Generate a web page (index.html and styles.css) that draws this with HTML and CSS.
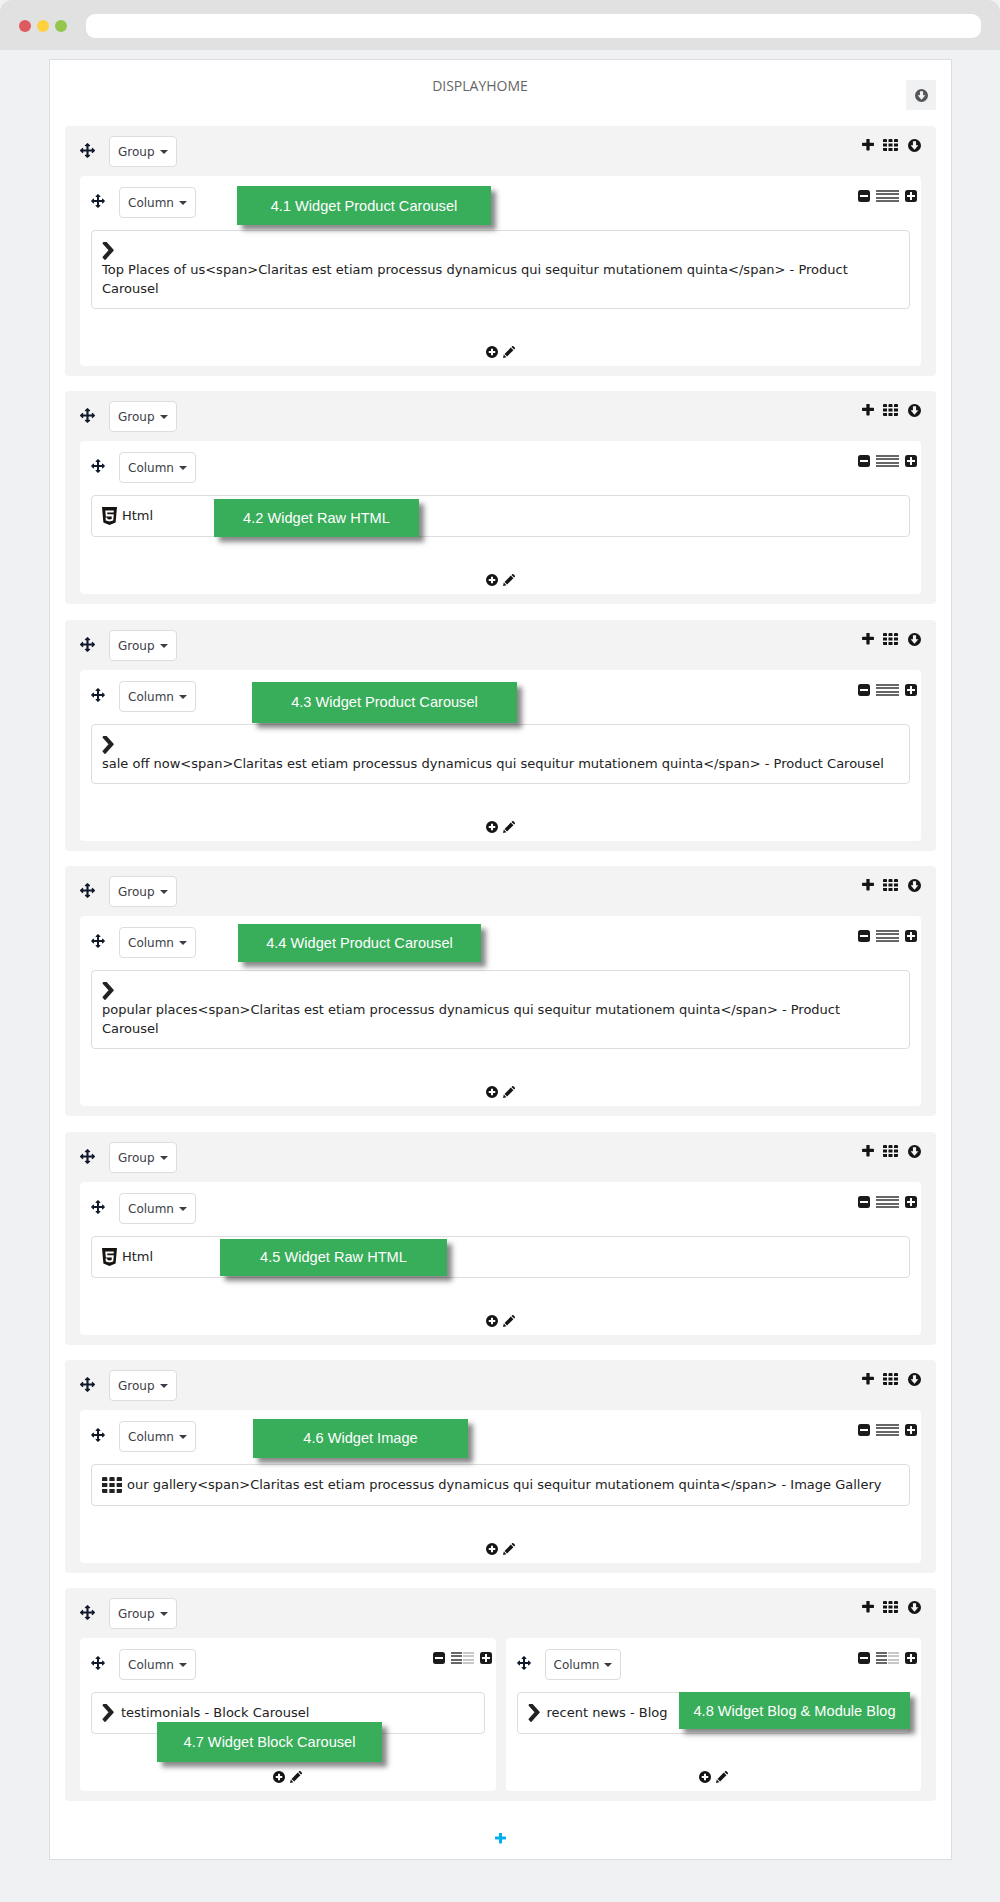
FILE: index.html
```html
<!DOCTYPE html>
<html lang="en">
<head>
<meta charset="utf-8">
<title>Display Home</title>
<link rel="stylesheet" href="styles.css">
</head>
<body>
<svg class="sprite" xmlns="http://www.w3.org/2000/svg">
  <symbol id="i-move" viewBox="0 0 1792 1792"><path d="M1792 896q0 26-19 45l-256 256q-19 19-45 19t-45-19-19-45v-128h-384v384h128q26 0 45 19t19 45-19 45l-256 256q-19 19-45 19t-45-19l-256-256q-19-19-19-45t19-45 45-19h128v-384h-384v128q0 26-19 45t-45 19-45-19l-256-256q-19-19-19-45t19-45l256-256q19-19 45-19t45 19 19 45v128h384v-384h-128q-26 0-45-19t-19-45 19-45l256-256q19-19 45-19t45 19l256 256q19 19 19 45t-19 45-45 19h-128v384h384v-128q0-26 19-45t45-19 45 19l256 256q19 19 19 45z"/></symbol>
  <symbol id="i-chevron" viewBox="300 150 1100 1490" preserveAspectRatio="none"><path d="M1363 877l-742 742q-19 19-45 19t-45-19l-166-166q-19-19-19-45t19-45l531-531-531-531q-19-19-19-45t19-45l166-166q19-19 45-19t45 19l742 742q19 19 19 45t-19 45z"/></symbol>
  <symbol id="i-plus" viewBox="190 190 1410 1410"><path d="M1600 736v192q0 40-28 68t-68 28h-416v416q0 40-28 68t-68 28h-192q-40 0-68-28t-28-68v-416h-416q-40 0-68-28t-28-68v-192q0-40 28-68t68-28h416v-416q0-40 28-68t68-28h192q40 0 68 28t28 68v416h416q40 0 68 28t28 68z"/></symbol>
  <symbol id="i-grid" viewBox="0 0 15 12"><path d="M0 1a1 1 0 0 1 1-1h2a1 1 0 0 1 1 1v2H0zM5.500 1a1 1 0 0 1 1-1h2a1 1 0 0 1 1 1v2h-4zM11 1a1 1 0 0 1 1-1h2a1 1 0 0 1 1 1v2h-4zM0 4.500h4v3H0zM5.500 4.500h4v3h-4zM11 4.500h4v3h-4zM0 9h4v3H1a1 1 0 0 1-1-1zM5.500 9h4v3h-4zM11 9h4v2a1 1 0 0 1-1 1h-3z"/></symbol>
  <symbol id="i-circle-down" viewBox="0 0 14 14"><path fill-rule="evenodd" d="M7 0a7 7 0 1 1 0 14A7 7 0 0 1 7 0zM5.300 2.500v4.300H2.800L7 11.500l4.200-4.700H8.700V2.500z"/></symbol>
  <symbol id="i-circle-plus" viewBox="0 0 14 14"><path fill-rule="evenodd" d="M7 0a7 7 0 1 1 0 14A7 7 0 0 1 7 0zM5.800 3.200v2.600H3.200v2.400h2.600v2.600h2.400V8.200h2.600V5.800H8.200V3.200z"/></symbol>
  <symbol id="i-sq-minus" viewBox="0 0 12 12"><path fill-rule="evenodd" d="M2.500 0h7A2.500 2.500 0 0 1 12 2.500v7A2.500 2.500 0 0 1 9.500 12h-7A2.500 2.500 0 0 1 0 9.500v-7A2.500 2.500 0 0 1 2.500 0zM2 5v2h8V5z"/></symbol>
  <symbol id="i-sq-plus" viewBox="0 0 12 12"><path fill-rule="evenodd" d="M2.500 0h7A2.500 2.500 0 0 1 12 2.500v7A2.500 2.500 0 0 1 9.500 12h-7A2.500 2.500 0 0 1 0 9.500v-7A2.500 2.500 0 0 1 2.500 0zM5 2v3H2v2h3v3h2V7h3V5H7V2z"/></symbol>
  <symbol id="i-pencil" viewBox="0 0 12 12"><path d="M0 12l.8-3.400 2.600 2.600zM1.500 7.900L7.800 1.600l2.600 2.600-6.300 6.300zM8.500.9l.6-.6a1 1 0 0 1 1.400 0l1.200 1.200a1 1 0 0 1 0 1.400l-.6.600z"/></symbol>
  <symbol id="i-html5" viewBox="0 0 15 18"><path fill-rule="evenodd" d="M0 0h15l-1.400 15.500L7.500 18l-6.100-2.500zM3.300 3.500l.5 6h6l-.2 2.400-2.100.6-2.100-.6-.1-1.500H3.500l.3 3.100 3.700 1.100 3.700-1.100.6-6.300H5.300l-.1-1.800h6.500l.1-1.900z"/></symbol>
</svg>

<header class="browser-bar">
  <span class="dot dot-red"></span>
  <span class="dot dot-yellow"></span>
  <span class="dot dot-green"></span>
  <div class="address"></div>
</header>

<main class="panel">
  <div class="panel-head">
    <h1 class="panel-title">DISPLAYHOME</h1>
    <button class="panel-btn"><svg class="ic ic-13"><use href="#i-circle-down"/></svg></button>
  </div>

  <section class="group">
    <div class="group-head">
      <svg class="ic ic-move"><use href="#i-move"/></svg>
      <span class="drop">Group<i class="caret"></i></span>
      <div class="group-tools"><svg class="ic ic-12"><use href="#i-plus"/></svg><svg class="ic ic-grid"><use href="#i-grid"/></svg><svg class="ic ic-13"><use href="#i-circle-down"/></svg></div>
    </div>
    <div class="cols">
      <div class="col">
        <div class="col-head">
          <svg class="ic ic-move-sm"><use href="#i-move"/></svg>
          <span class="drop">Column<i class="caret"></i></span>
          <div class="col-tools"><svg class="ic ic-12"><use href="#i-sq-minus"/></svg><span class="bars"><i></i></span><svg class="ic ic-12"><use href="#i-sq-plus"/></svg></div>
        </div>
        <div class="widget"><svg class="ic ic-chevron block"><use href="#i-chevron"/></svg>Top Places of us&lt;span&gt;Claritas est etiam processus dynamicus qui sequitur mutationem quinta&lt;/span&gt; - Product Carousel</div>
        <div class="col-foot"><svg class="ic ic-12"><use href="#i-circle-plus"/></svg><svg class="ic ic-12"><use href="#i-pencil"/></svg></div>
      </div>
    </div>
    <div class="callout c1">4.1 Widget Product Carousel</div>
  </section>

  <section class="group">
    <div class="group-head">
      <svg class="ic ic-move"><use href="#i-move"/></svg>
      <span class="drop">Group<i class="caret"></i></span>
      <div class="group-tools"><svg class="ic ic-12"><use href="#i-plus"/></svg><svg class="ic ic-grid"><use href="#i-grid"/></svg><svg class="ic ic-13"><use href="#i-circle-down"/></svg></div>
    </div>
    <div class="cols">
      <div class="col">
        <div class="col-head">
          <svg class="ic ic-move-sm"><use href="#i-move"/></svg>
          <span class="drop">Column<i class="caret"></i></span>
          <div class="col-tools"><svg class="ic ic-12"><use href="#i-sq-minus"/></svg><span class="bars"><i></i></span><svg class="ic ic-12"><use href="#i-sq-plus"/></svg></div>
        </div>
        <div class="widget inline"><svg class="ic ic-html"><use href="#i-html5"/></svg><span>Html</span></div>
        <div class="col-foot"><svg class="ic ic-12"><use href="#i-circle-plus"/></svg><svg class="ic ic-12"><use href="#i-pencil"/></svg></div>
      </div>
    </div>
    <div class="callout c2">4.2 Widget Raw HTML</div>
  </section>

  <section class="group">
    <div class="group-head">
      <svg class="ic ic-move"><use href="#i-move"/></svg>
      <span class="drop">Group<i class="caret"></i></span>
      <div class="group-tools"><svg class="ic ic-12"><use href="#i-plus"/></svg><svg class="ic ic-grid"><use href="#i-grid"/></svg><svg class="ic ic-13"><use href="#i-circle-down"/></svg></div>
    </div>
    <div class="cols">
      <div class="col">
        <div class="col-head">
          <svg class="ic ic-move-sm"><use href="#i-move"/></svg>
          <span class="drop">Column<i class="caret"></i></span>
          <div class="col-tools"><svg class="ic ic-12"><use href="#i-sq-minus"/></svg><span class="bars"><i></i></span><svg class="ic ic-12"><use href="#i-sq-plus"/></svg></div>
        </div>
        <div class="widget"><svg class="ic ic-chevron block"><use href="#i-chevron"/></svg>sale off now&lt;span&gt;Claritas est etiam processus dynamicus qui sequitur mutationem quinta&lt;/span&gt; - Product Carousel</div>
        <div class="col-foot"><svg class="ic ic-12"><use href="#i-circle-plus"/></svg><svg class="ic ic-12"><use href="#i-pencil"/></svg></div>
      </div>
    </div>
    <div class="callout c3">4.3 Widget Product Carousel</div>
  </section>

  <section class="group">
    <div class="group-head">
      <svg class="ic ic-move"><use href="#i-move"/></svg>
      <span class="drop">Group<i class="caret"></i></span>
      <div class="group-tools"><svg class="ic ic-12"><use href="#i-plus"/></svg><svg class="ic ic-grid"><use href="#i-grid"/></svg><svg class="ic ic-13"><use href="#i-circle-down"/></svg></div>
    </div>
    <div class="cols">
      <div class="col">
        <div class="col-head">
          <svg class="ic ic-move-sm"><use href="#i-move"/></svg>
          <span class="drop">Column<i class="caret"></i></span>
          <div class="col-tools"><svg class="ic ic-12"><use href="#i-sq-minus"/></svg><span class="bars"><i></i></span><svg class="ic ic-12"><use href="#i-sq-plus"/></svg></div>
        </div>
        <div class="widget"><svg class="ic ic-chevron block"><use href="#i-chevron"/></svg>popular places&lt;span&gt;Claritas est etiam processus dynamicus qui sequitur mutationem quinta&lt;/span&gt; - Product Carousel</div>
        <div class="col-foot"><svg class="ic ic-12"><use href="#i-circle-plus"/></svg><svg class="ic ic-12"><use href="#i-pencil"/></svg></div>
      </div>
    </div>
    <div class="callout c4">4.4 Widget Product Carousel</div>
  </section>

  <section class="group">
    <div class="group-head">
      <svg class="ic ic-move"><use href="#i-move"/></svg>
      <span class="drop">Group<i class="caret"></i></span>
      <div class="group-tools"><svg class="ic ic-12"><use href="#i-plus"/></svg><svg class="ic ic-grid"><use href="#i-grid"/></svg><svg class="ic ic-13"><use href="#i-circle-down"/></svg></div>
    </div>
    <div class="cols">
      <div class="col">
        <div class="col-head">
          <svg class="ic ic-move-sm"><use href="#i-move"/></svg>
          <span class="drop">Column<i class="caret"></i></span>
          <div class="col-tools"><svg class="ic ic-12"><use href="#i-sq-minus"/></svg><span class="bars"><i></i></span><svg class="ic ic-12"><use href="#i-sq-plus"/></svg></div>
        </div>
        <div class="widget inline"><svg class="ic ic-html"><use href="#i-html5"/></svg><span>Html</span></div>
        <div class="col-foot"><svg class="ic ic-12"><use href="#i-circle-plus"/></svg><svg class="ic ic-12"><use href="#i-pencil"/></svg></div>
      </div>
    </div>
    <div class="callout c5">4.5 Widget Raw HTML</div>
  </section>

  <section class="group">
    <div class="group-head">
      <svg class="ic ic-move"><use href="#i-move"/></svg>
      <span class="drop">Group<i class="caret"></i></span>
      <div class="group-tools"><svg class="ic ic-12"><use href="#i-plus"/></svg><svg class="ic ic-grid"><use href="#i-grid"/></svg><svg class="ic ic-13"><use href="#i-circle-down"/></svg></div>
    </div>
    <div class="cols">
      <div class="col">
        <div class="col-head">
          <svg class="ic ic-move-sm"><use href="#i-move"/></svg>
          <span class="drop">Column<i class="caret"></i></span>
          <div class="col-tools"><svg class="ic ic-12"><use href="#i-sq-minus"/></svg><span class="bars"><i></i></span><svg class="ic ic-12"><use href="#i-sq-plus"/></svg></div>
        </div>
        <div class="widget inline"><svg class="ic ic-gallery"><use href="#i-grid"/></svg><span>our gallery&lt;span&gt;Claritas est etiam processus dynamicus qui sequitur mutationem quinta&lt;/span&gt; - Image Gallery</span></div>
        <div class="col-foot"><svg class="ic ic-12"><use href="#i-circle-plus"/></svg><svg class="ic ic-12"><use href="#i-pencil"/></svg></div>
      </div>
    </div>
    <div class="callout c6">4.6 Widget Image</div>
  </section>

  <section class="group">
    <div class="group-head">
      <svg class="ic ic-move"><use href="#i-move"/></svg>
      <span class="drop">Group<i class="caret"></i></span>
      <div class="group-tools"><svg class="ic ic-12"><use href="#i-plus"/></svg><svg class="ic ic-grid"><use href="#i-grid"/></svg><svg class="ic ic-13"><use href="#i-circle-down"/></svg></div>
    </div>
    <div class="cols">
      <div class="col">
        <div class="col-head">
          <svg class="ic ic-move-sm"><use href="#i-move"/></svg>
          <span class="drop">Column<i class="caret"></i></span>
          <div class="col-tools"><svg class="ic ic-12"><use href="#i-sq-minus"/></svg><span class="bars half"><i></i></span><svg class="ic ic-12"><use href="#i-sq-plus"/></svg></div>
        </div>
        <div class="widget inline"><svg class="ic ic-chevron"><use href="#i-chevron"/></svg><span>testimonials - Block Carousel</span></div>
        <div class="col-foot"><svg class="ic ic-12"><use href="#i-circle-plus"/></svg><svg class="ic ic-12"><use href="#i-pencil"/></svg></div>
      </div>
      <div class="col">
        <div class="col-head">
          <svg class="ic ic-move-sm"><use href="#i-move"/></svg>
          <span class="drop">Column<i class="caret"></i></span>
          <div class="col-tools"><svg class="ic ic-12"><use href="#i-sq-minus"/></svg><span class="bars half"><i></i></span><svg class="ic ic-12"><use href="#i-sq-plus"/></svg></div>
        </div>
        <div class="widget inline"><svg class="ic ic-chevron"><use href="#i-chevron"/></svg><span>recent news - Blog</span></div>
        <div class="col-foot"><svg class="ic ic-12"><use href="#i-circle-plus"/></svg><svg class="ic ic-12"><use href="#i-pencil"/></svg></div>
      </div>
    </div>
    <div class="callout c7">4.7 Widget Block Carousel</div>
    <div class="callout c8">4.8 Widget Blog &amp; Module Blog</div>
  </section>

  <div class="panel-foot"><svg class="ic ic-add"><use href="#i-plus"/></svg></div>
</main>
</body>
</html>
```
FILE: styles.css
```css
* { box-sizing: border-box; }
html, body { margin: 0; padding: 0; }
body {
  background: #f0f1f3;
  min-height: 1902px;
  font-family: "DejaVu Sans", Verdana, sans-serif;
  font-size: 12px;
  color: #222;
}
.sprite { display: none; }
.browser-bar {
  display: flex;
  align-items: center;
  height: 50px;
  padding: 2px 19px 0;
  background: #e1e1e1;
  border-top-left-radius: 12px;
  border-top-right-radius: 12px;
}
.dot { width: 12px; height: 12px; border-radius: 50%; margin-right: 6px; }
.dot-red { background: #dd5a5f; }
.dot-yellow { background: #fdd13f; }
.dot-green { background: #95c74f; }
.address {
  flex: 1;
  height: 24px;
  margin-left: 13px;
  background: #fff;
  border-radius: 9px;
}
.panel {
  width: 903px;
  margin: 9px 0 0 49px;
  padding: 0 15px;
  background: #fff;
  border: 1px solid #dcdde0;
}
.panel-head { display: flex; height: 66px; padding-top: 20px; }
.panel-title {
  flex: 0 0 830px;
  margin: 0;
  font: 400 14px/12px "Open Sans", sans-serif;
  text-align: center;
  color: #666;
}
.panel-btn {
  width: 30px;
  height: 30px;
  margin-left: 11px;
  padding: 0;
  border: 0;
  background: #f0f1f3;
  display: flex;
  align-items: center;
  justify-content: center;
  color: #555;
}
.ic { display: inline-block; fill: currentColor; flex: none; }
.ic-12 { width: 12px; height: 12px; }
.ic-13 { width: 13px; height: 13px; }
.ic-grid { width: 15px; height: 12px; }
.ic-move { width: 15px; height: 15px; margin: 7px 14px 0 0; color: #111a2a; }
.ic-move-sm { width: 14px; height: 14px; margin: 7px 14px 0 0; color: #111a2a; }
.ic-chevron { width: 12px; height: 18px; margin-right: 7px; color: #222; }
.ic-chevron.block { display: block; margin: 1px 0; }
.ic-html { width: 15px; height: 18px; margin-right: 5px; color: #15120f; }
.ic-gallery { width: 20px; height: 16px; margin-right: 5px; color: #222; }
.ic-add { width: 11px; height: 11px; color: #00aeef; }

.group {
  position: relative;
  margin-bottom: 15.300px;
  padding: 0 15px 10px;
  background: #f3f3f3;
  border-radius: 4px;
}
.group-head { display: flex; align-items: flex-start; height: 50px; padding-top: 10px; }
.group-tools { margin-left: auto; display: flex; gap: 9px; padding-top: 3px; color: #151515; }
.group-tools .ic-13 { margin-left: 1px; }
.drop {
  display: inline-flex;
  align-items: center;
  height: 31px;
  padding: 1px 8px 0;
  background: #fff;
  border: 1px solid #ddd;
  border-radius: 4px;
  font-size: 12px;
  color: #3b3d46;
}
.caret {
  margin-left: 5px;
  border-top: 4px solid #3b3d46;
  border-left: 4px solid transparent;
  border-right: 4px solid transparent;
}
.cols { display: flex; gap: 10px; }
.col {
  flex: 1 1 0;
  min-width: 0;
  padding: 0 11px;
  background: #fff;
  border-radius: 4px;
}
.col-head { display: flex; align-items: flex-start; height: 54px; padding-top: 11px; }
.col-tools { margin-left: auto; display: flex; gap: 6px; padding-top: 3px; margin-right: -7px; color: #1b1b1b; }
.bars {
  width: 23px;
  height: 12px;
  display: block;
  background: repeating-linear-gradient(#666 0 2px, #fff 2px 3.330px);
}
.bars.half { background: repeating-linear-gradient(90deg, transparent 0 11px, #fff 11px 12px, transparent 12px), repeating-linear-gradient(#666 0 2px, #fff 2px 3.330px); }
.bars.half i {
  display: block;
  margin-left: 12px;
  height: 12px;
  background: repeating-linear-gradient(#c8c8c8 0 2px, #fff 2px 3.330px);
}
.widget {
  padding: 10px;
  background: #fff;
  border: 1px solid #ddd;
  border-radius: 4px;
  font-size: 13px;
  line-height: 18.500px;
  color: #222;
}
.widget.inline { display: flex; align-items: center; height: 42px; line-height: 20px; }
.col-foot { display: flex; justify-content: center; gap: 5px; padding: 37px 0 8px; color: #151515; }
.panel-foot { display: flex; justify-content: center; padding: 16px 0 15px; }
.callout {
  position: absolute;
  display: flex;
  align-items: center;
  justify-content: center;
  background: #38ad5a;
  color: #fff;
  font: 14.600px "Liberation Sans", Arial, sans-serif;
  box-shadow: 5px 5px 5px rgba(40, 40, 40, .55);
}
.c1 { left: 172px; top: 60px; width: 254px; height: 39px; }
.c2 { left: 149px; top: 108px; width: 205px; height: 38px; }
.c3 { left: 187px; top: 62px; width: 265px; height: 41px; }
.c4 { left: 173px; top: 58px; width: 243px; height: 38px; }
.c5 { left: 155px; top: 107px; width: 227px; height: 37px; }
.c6 { left: 188px; top: 59px; width: 215px; height: 39px; }
.c7 { left: 92px; top: 134px; width: 225px; height: 40px; }
.c8 { left: 614px; top: 104px; width: 231px; height: 37px; }
```
